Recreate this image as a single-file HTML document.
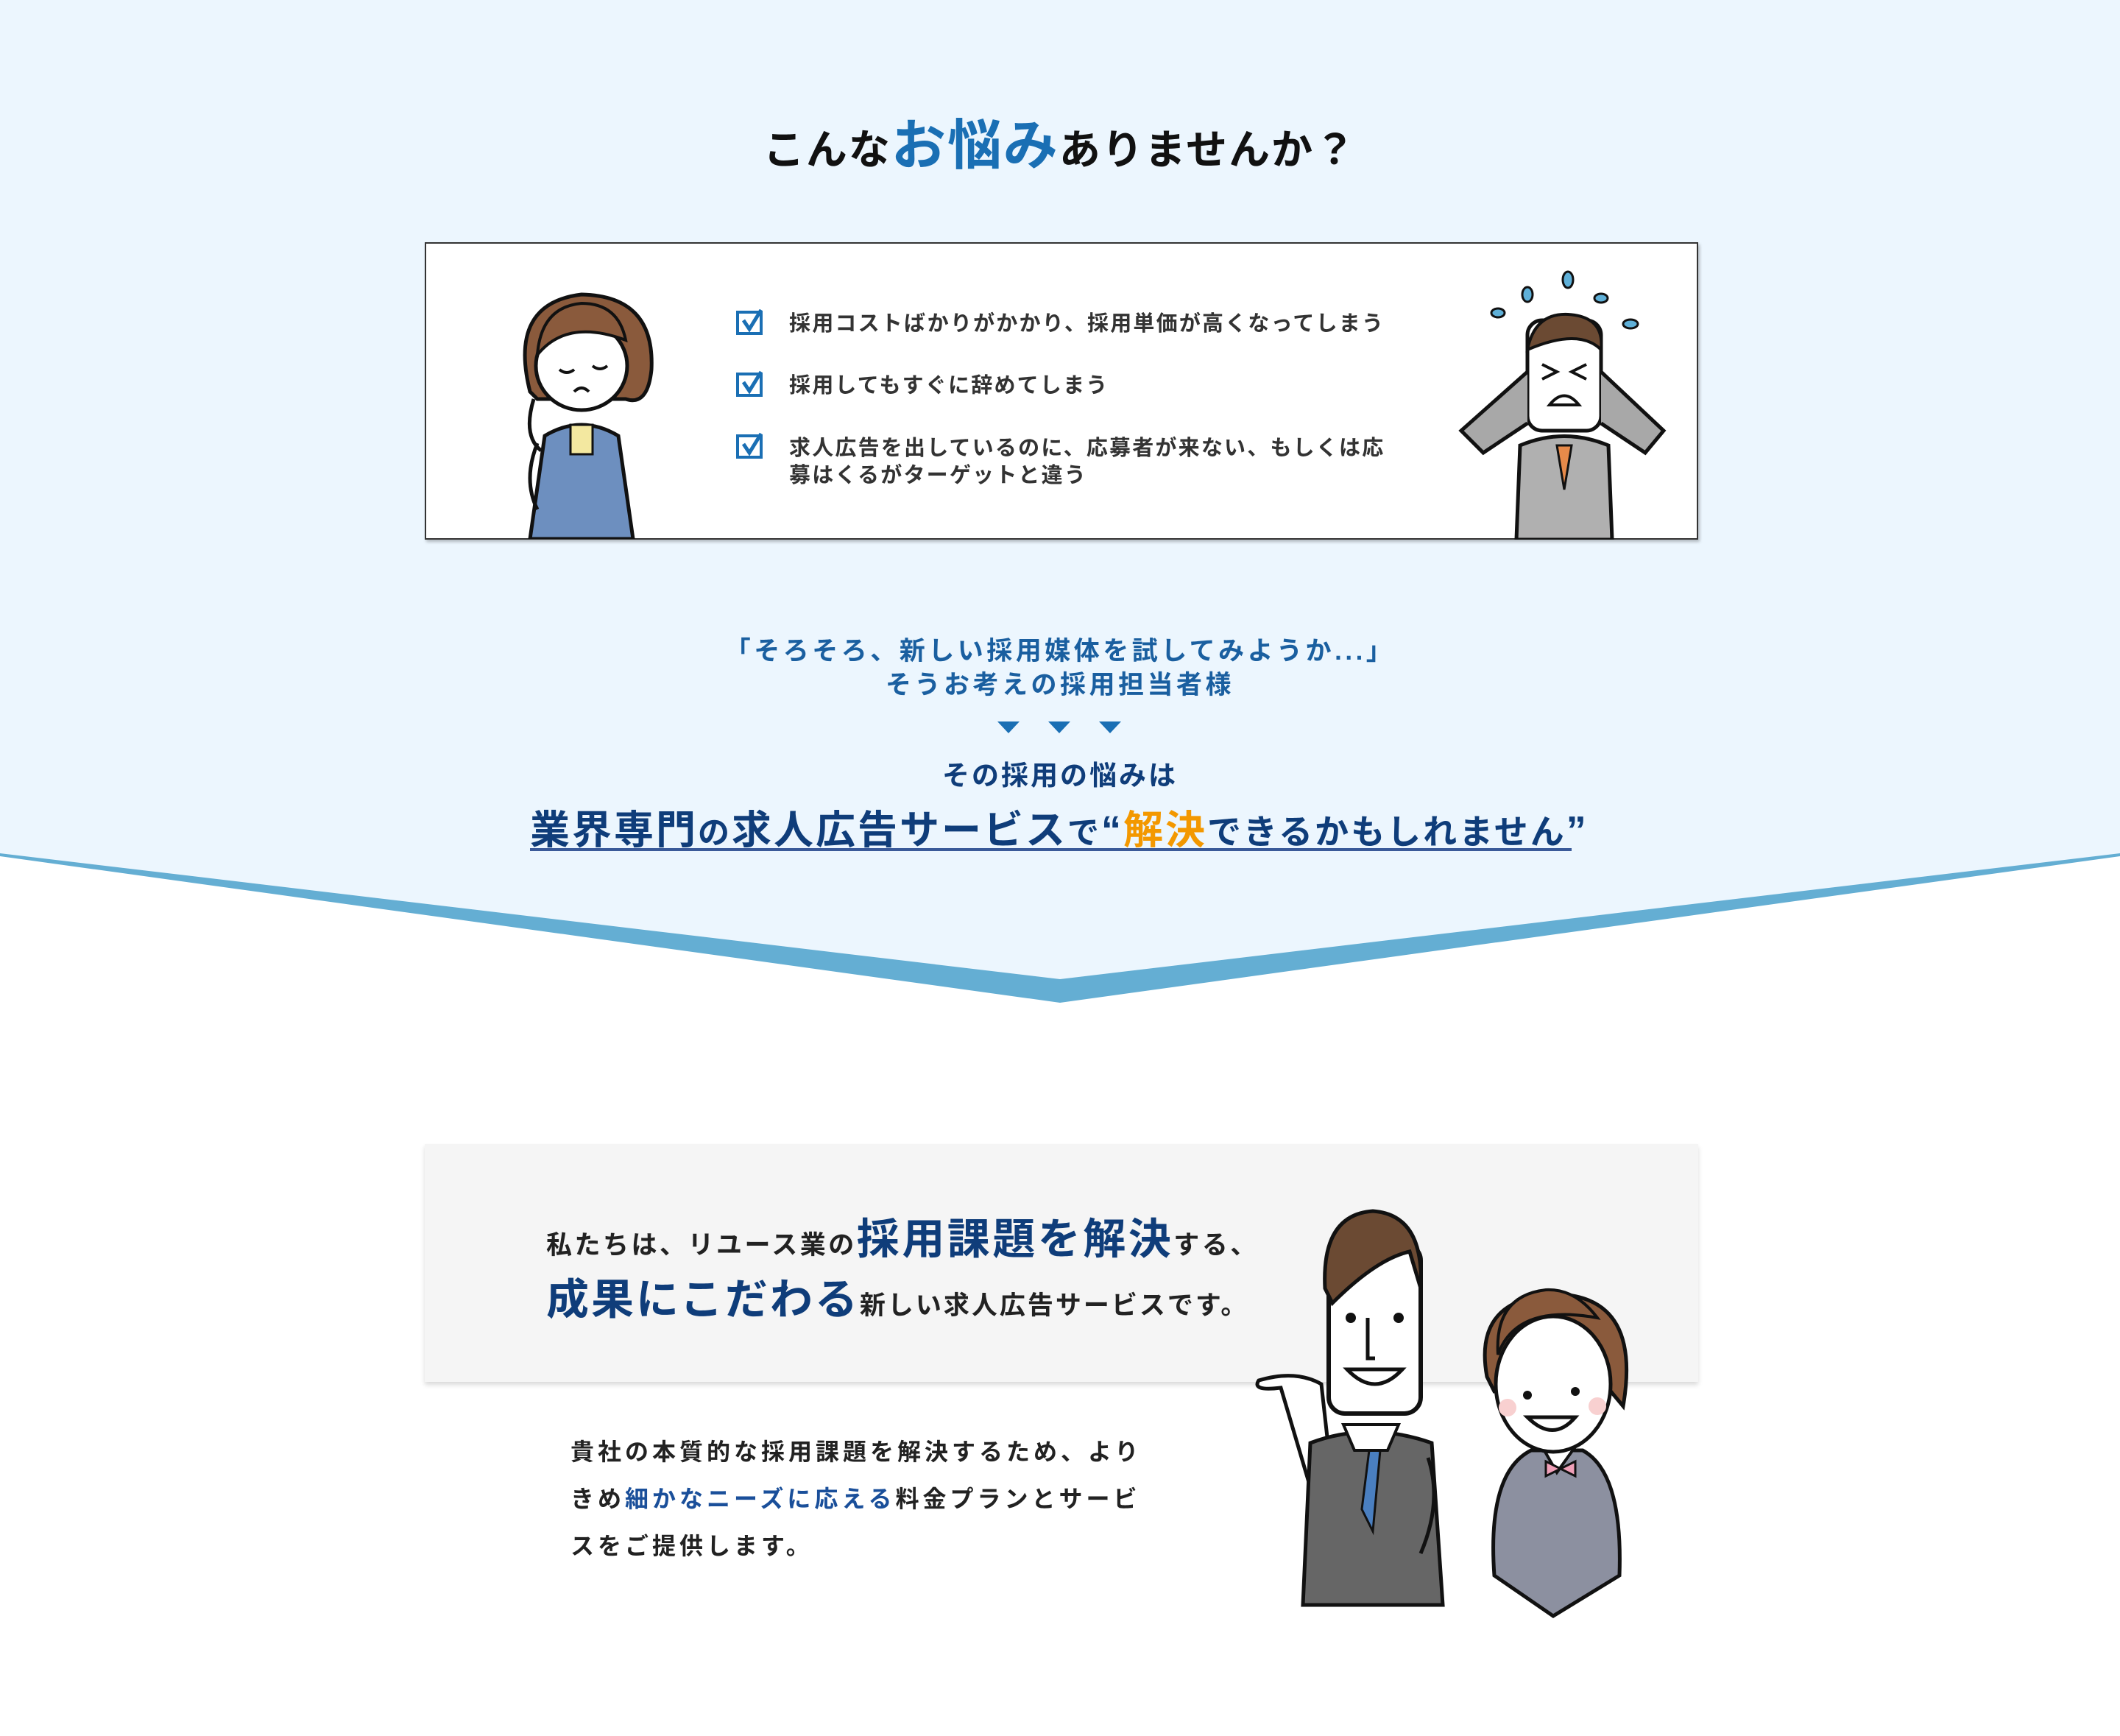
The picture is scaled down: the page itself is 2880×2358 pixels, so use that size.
<!DOCTYPE html>
<html><head><meta charset="utf-8"><style>
*{margin:0;padding:0;box-sizing:border-box}
body{width:2880px;height:2358px;position:relative;background:#fff;font-family:"Liberation Sans","Noto Sans CJK JP",sans-serif;font-weight:700;overflow:hidden}
.a{position:absolute;white-space:nowrap}
.box1{left:577px;top:329px;width:1730px;height:404px;background:#fff;border:2px solid #333;box-shadow:2px 3px 4px rgba(0,0,0,.25)}
.li{font-size:29px;letter-spacing:2.2px;color:#333;line-height:37px}
.box2{left:577px;top:1554px;width:1730px;height:323px;background:#f5f5f5;box-shadow:0 4px 6px rgba(0,0,0,.15)}
</style></head><body>
<svg class="a" style="left:0;top:0" width="2880" height="1400">
<polygon points="0,0 2880,0 2880,1159 1440,1330 0,1159" fill="#ecf6fe"/>
<polygon points="0,1159 1440,1330 2880,1159 2880,1163 1440,1362 0,1163" fill="#64aed3"/>
</svg>
<div class="a" style="left:0;width:2880px;top:138px;text-align:center;font-size:56px;color:#111;letter-spacing:2px">こんな<span style="color:#1a6fb4;font-size:74px">お悩み</span>ありませんか？</div>
<div class="a box1"></div>
<svg class="a" style="left:1000px;top:420px" width="40" height="240">
<g fill="none" stroke="#1a6fb4" stroke-width="4"><rect x="2" y="4" width="32" height="29"/><rect x="2" y="88" width="32" height="29"/><rect x="2" y="172" width="32" height="29"/></g>
<g fill="none" stroke="#1a6fb4" stroke-width="5"><path d="M10 15l8 12 16-26"/><path d="M10 99l8 12 16-26"/><path d="M10 183l8 12 16-26"/></g>
</svg>
<div class="a li" style="left:1072px;top:422px">採用コストばかりがかかり、採用単価が高くなってしまう</div>
<div class="a li" style="left:1072px;top:506px">採用してもすぐに辞めてしまう</div>
<div class="a li" style="left:1072px;top:591px">求人広告を出しているのに、応募者が来ない、もしくは応<br>募はくるがターゲットと違う</div>
<svg class="a" style="left:690px;top:392px" width="210" height="340" viewBox="0 0 210 340">
<path d="M30 140 Q0 20 100 8 Q200 10 195 110 Q190 160 160 150 L40 150Z" fill="#8a5a3c" stroke="#111" stroke-width="5"/>
<ellipse cx="100" cy="105" rx="62" ry="60" fill="#fff" stroke="#111" stroke-width="5"/>
<path d="M40 90 Q80 40 160 70 Q150 20 100 20 Q45 25 40 90Z" fill="#8a5a3c" stroke="#111" stroke-width="4"/>
<path d="M70 110q10 8 20 0M115 105q10 8 20 0M90 140q10-10 20 0" fill="none" stroke="#111" stroke-width="4"/>
<path d="M50 200 Q100 170 150 200 L170 340 L30 340Z" fill="#6d8fbf" stroke="#111" stroke-width="5"/>
<path d="M85 185h30v40h-30z" fill="#f3e8a0" stroke="#111" stroke-width="3"/>
<path d="M40 210 Q20 260 40 300 M35 150 Q20 200 45 220" fill="none" stroke="#111" stroke-width="5"/>
</svg>
<svg class="a" style="left:1975px;top:365px" width="300" height="368" viewBox="0 0 300 368">
<g fill="#5fb0d8" stroke="#111" stroke-width="3"><ellipse cx="60" cy="60" rx="9" ry="6"/><ellipse cx="100" cy="35" rx="7" ry="10"/><ellipse cx="155" cy="15" rx="7" ry="11"/><ellipse cx="200" cy="40" rx="9" ry="6"/><ellipse cx="240" cy="75" rx="10" ry="6"/></g>
<rect x="100" y="70" width="100" height="150" rx="20" fill="#fff" stroke="#111" stroke-width="5"/>
<path d="M100 110 Q110 60 155 62 Q205 65 200 110 Q170 80 100 110Z" fill="#6b4a33" stroke="#111" stroke-width="4"/>
<path d="M120 130l20 10-20 10M180 130l-20 10 20 10M130 185q20-25 40 0z" fill="none" stroke="#111" stroke-width="4"/>
<path d="M100 140 L10 220 L40 250 L100 210 M200 140 L285 220 L260 250 L200 210" fill="#a8a8a8" stroke="#111" stroke-width="5"/>
<path d="M90 240 Q150 215 210 240 L215 368 L85 368Z" fill="#b0b0b0" stroke="#111" stroke-width="5"/>
<path d="M140 240 L150 300 L160 240Z" fill="#e78a4a" stroke="#111" stroke-width="3"/>
</svg>
<div class="a" style="left:0;width:2880px;top:862px;text-align:center;font-size:35px;letter-spacing:4.5px;color:#1a5fa0;line-height:46px">「そろそろ、新しい採用媒体を試してみようか...」<br>そうお考えの採用担当者様</div>
<svg class="a" style="left:1355px;top:980px" width="170" height="22">
<g fill="#1a6fb4"><path d="M0 0h30l-15 16z"/><path d="M69 0h30l-15 16z"/><path d="M138 0h30l-15 16z"/></g>
</svg>
<div class="a" style="left:0;width:2880px;top:1023px;text-align:center;font-size:37px;letter-spacing:3px;color:#0f3d7a">その採用の悩みは</div>
<div class="a" style="left:720px;width:1415px;top:1083px;text-align:center;font-size:54px;letter-spacing:3px;color:#0f3d7a">業界専門<span style="font-size:43px">の</span>求人広告サービス<span style="font-size:43px">で</span>“<span style="color:#f39800">解決</span><span style="font-size:46px">できるかもしれません</span>”</div>
<div class="a" style="left:720px;top:1152px;width:1415px;height:4px;background:#3a5a99"></div>
<div class="a box2"></div>
<div class="a" style="left:742px;top:1636px;font-size:35px;letter-spacing:3.5px;color:#222">私たちは、リユース業の<span style="color:#0f3d7a;font-size:58px">採用課題を解決</span>する、</div>
<div class="a" style="left:742px;top:1718px;font-size:35px;letter-spacing:3px;color:#222"><span style="color:#0f3d7a;font-size:58px">成果にこだわる</span>新しい求人広告サービスです。</div>
<div class="a" style="left:775px;top:1940px;font-size:32px;letter-spacing:5px;color:#222;line-height:64px">貴社の本質的な採用課題を解決するため、より<br>きめ<span style="color:#1a4f9a">細かなニーズに応える</span>料金プランとサービ<br>スをご提供します。</div>
<svg class="a" style="left:1700px;top:1640px" width="580" height="560" viewBox="0 0 580 560">
<path d="M95 240 Q60 220 10 235 Q0 250 40 245 L80 380 L110 375Z" fill="#fff" stroke="#111" stroke-width="5"/>
<path d="M80 320 Q160 290 245 320 L260 540 L70 540Z" fill="#666" stroke="#111" stroke-width="5"/>
<path d="M145 300 L160 330 L150 410 L165 440 L175 330 L185 300Z" fill="#4a7fc0" stroke="#111" stroke-width="3"/>
<path d="M125 295 h75 L185 330 L140 330Z" fill="#fff" stroke="#111" stroke-width="4"/>
<rect x="105" y="50" width="125" height="230" rx="22" fill="#fff" stroke="#111" stroke-width="6"/>
<path d="M100 110 Q95 10 165 5 Q235 10 230 110 L215 60 Q170 70 110 130Z" fill="#6b4a33" stroke="#111" stroke-width="5"/>
<circle cx="135" cy="150" r="7" fill="#111"/><circle cx="200" cy="150" r="7" fill="#111"/>
<path d="M158 150 v55 h10 M130 220 Q168 260 205 220Z" fill="#fff" stroke="#111" stroke-width="5"/>
<path d="M240 340 Q260 400 230 470" fill="none" stroke="#111" stroke-width="5"/>
<path d="M380 330 Q320 360 330 500 L410 555 L500 500 Q505 360 450 330Z" fill="#8c90a0" stroke="#111" stroke-width="5"/>
<path d="M395 325 L415 360 L440 325" fill="#fff" stroke="#111" stroke-width="4"/>
<path d="M400 345l20 10 20-10v20l-20-10-20 10z" fill="#f0a0b8" stroke="#111" stroke-width="3"/>
<path d="M320 230 Q300 120 420 118 Q530 125 505 270 L480 240 L330 250Z" fill="#8a5a3c" stroke="#111" stroke-width="5"/>
<ellipse cx="410" cy="240" rx="78" ry="92" fill="#fff" stroke="#111" stroke-width="5"/>
<path d="M335 200 Q360 130 470 150 Q440 110 400 112 Q330 120 335 200Z" fill="#8a5a3c" stroke="#111" stroke-width="4"/>
<circle cx="375" cy="255" r="6" fill="#111"/><circle cx="440" cy="250" r="6" fill="#111"/>
<circle cx="348" cy="272" r="12" fill="#f8d0d0"/><circle cx="470" cy="270" r="12" fill="#f8d0d0"/>
<path d="M375 285 Q410 320 440 285Z" fill="#fff" stroke="#111" stroke-width="5"/>
</svg>
</body></html>
